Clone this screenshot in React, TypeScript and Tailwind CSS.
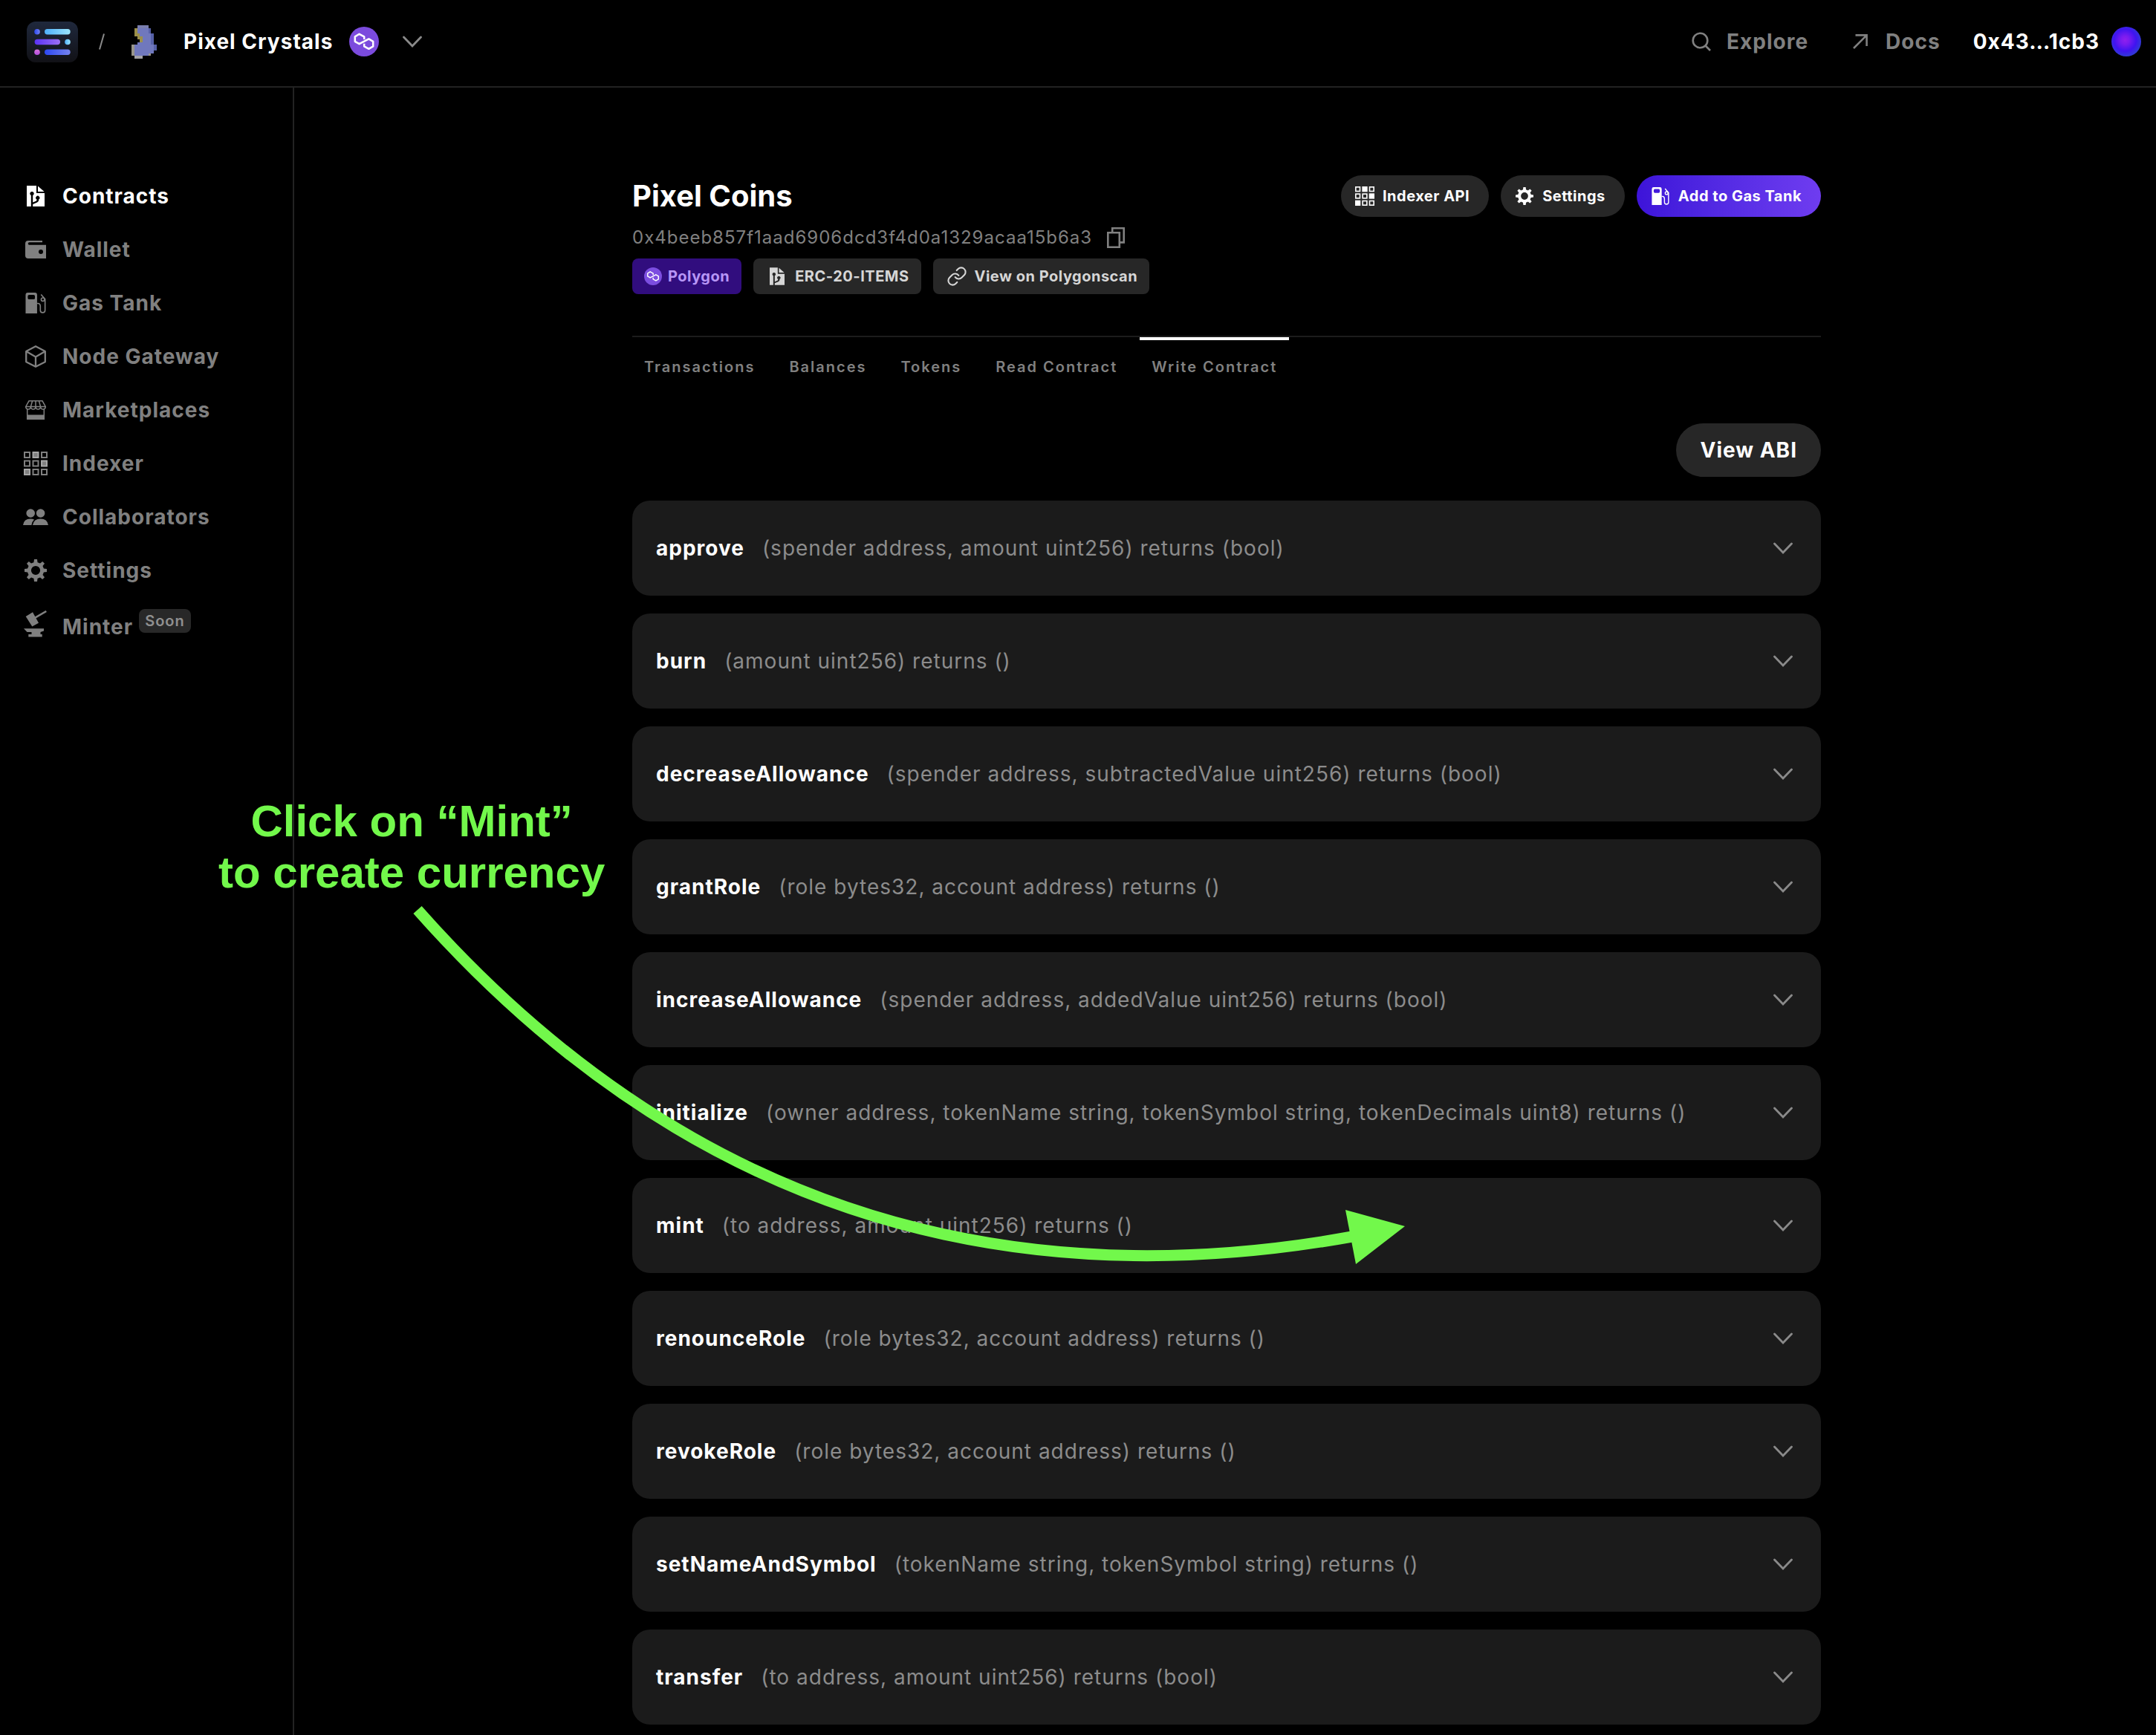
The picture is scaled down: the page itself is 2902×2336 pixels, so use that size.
import type { ReactNode } from "react";

function ContractIcon({ className = "h-7 w-6" }: { className?: string }) {
  return (
    <svg viewBox="0 0 24 28" className={className} fill="currentColor" aria-hidden="true">
      <path
        fillRule="evenodd"
        d="M0 0H13V10H24V28H8.2V25L14 22.6Q16.2 21.6 16.2 19.2V18.6A2.6 2.6 0 1 0 13.4 18.6V19.4Q13.4 20.4 12.4 20.8L8.2 22.6V13A2.7 2.7 0 1 0 5.8 13V28H0Z"
      />
      <path d="M15 0.5L23.5 8H15Z" />
    </svg>
  );
}

function WalletIcon() {
  return (
    <svg viewBox="0 0 28 24" className="h-6 w-7" fill="currentColor" aria-hidden="true">
      <path
        fillRule="evenodd"
        d="M4 0H23V2.2H5.5A1.7 1.7 0 0 0 5.5 5.8H28V24H4A4 4 0 0 1 0 20V4A4 4 0 0 1 4 0ZM21 12A3 3 0 1 0 21 18A3 3 0 1 0 21 12Z"
      />
    </svg>
  );
}

function GasIcon({ className = "h-7 w-7" }: { className?: string }) {
  return (
    <svg viewBox="0 0 28 29" className={className} fill="none" stroke="currentColor" strokeWidth="1.7" aria-hidden="true">
      <path
        fill="currentColor"
        stroke="none"
        fillRule="evenodd"
        d="M3 0H13Q16 0 16 3V29H0V3Q0 0 3 0ZM5 3Q3 3 3 5V7.4Q3 9.4 5 9.4H11Q13 9.4 13 7.4V5Q13 3 11 3Z"
      />
      <path d="M16 15H17Q20.5 15 20.5 19V24.5Q20.5 27.8 23.8 27.8Q27.1 27.8 27.1 24.5V9L21.5 2.5" />
      <circle cx="24" cy="9.6" r="2.3" />
    </svg>
  );
}

function CubeIcon() {
  return (
    <svg viewBox="0 0 28 30" className="h-[30px] w-7" fill="none" stroke="currentColor" strokeWidth="2.3" strokeLinejoin="round" aria-hidden="true">
      <path d="M14 1.2L26.8 8V22.2L14 28.8L1.2 22.2V8ZM1.2 8L14 15.4L26.8 8M14 15.4V28.8" />
    </svg>
  );
}

function ShopIcon() {
  return (
    <svg viewBox="0 0 28 26" className="h-[26px] w-7" fill="none" stroke="currentColor" strokeWidth="1.5" aria-hidden="true">
      <path d="M5 0.8H23L27.3 8.5H0.7ZM9.6 0.8L7.4 8.5M14 0.8V8.5M18.4 0.8L20.6 8.5" />
      <path d="M0.7 8.5Q1 12 4 12Q7.1 12 7.4 8.5Q7.7 12 10.7 12Q13.7 12 14 8.5Q14.3 12 17.3 12Q20.3 12 20.6 8.5Q20.9 12 24 12Q27 12 27.3 8.5" />
      <path d="M2.7 11.5V25H25.3V11.5" />
      <path d="M2 19.5H26V26H2Z" fill="currentColor" stroke="none" />
    </svg>
  );
}

const cells = [0, 1, 2, 3, 4, 5, 6, 7, 8];
const litCells = [1, 5, 6];

function IndexerIcon({ className = "size-8", lit = "#a6a6a6" }: { className?: string; lit?: string }) {
  return (
    <svg viewBox="0 0 32 32" className={className} fill="none" stroke="currentColor" strokeWidth="2" aria-hidden="true">
      {cells.map((i) => {
        const on = litCells.includes(i);
        return (
          <rect
            key={i}
            x={1 + (i % 3) * 11.5}
            y={1 + Math.floor(i / 3) * 11.5}
            width="7"
            height="7"
            fill={on ? "currentColor" : "none"}
            stroke={on ? lit : "currentColor"}
          />
        );
      })}
    </svg>
  );
}

function PeopleIcon() {
  return (
    <svg viewBox="0 0 34 22" className="h-[22px] w-[34px] shrink-0" fill="currentColor" aria-hidden="true">
      <circle cx="10.2" cy="6" r="5.8" />
      <circle cx="23.6" cy="6" r="5.8" />
      <path d="M13 22Q14.5 13.6 23.6 13.6Q32.6 13.6 34 22Z" />
      <path d="M0 22Q1.2 13.6 10 13.6Q12.8 13.6 15 14.6Q12 17.4 11.4 22Z" />
    </svg>
  );
}

const teeth = [0, 45, 90, 135, 180, 225, 270, 315];

function GearIcon({ className = "size-[30px]" }: { className?: string }) {
  return (
    <svg viewBox="0 0 30 30" className={className} fill="currentColor" aria-hidden="true">
      <circle cx="15" cy="15" r="8.6" fill="none" stroke="currentColor" strokeWidth="5" />
      {teeth.map((a) => (
        <path key={a} d="M12.2 6L13 0H17L17.8 6Z" transform={`rotate(${a} 15 15)`} />
      ))}
    </svg>
  );
}

function MinterIcon() {
  return (
    <svg viewBox="0 0 32 36" className="h-9 w-8" fill="currentColor" aria-hidden="true">
      <path d="M2.7 8L12 2.3L20 16.7L11.3 21.5Z" />
      <path d="M14.5 10.2L30.3 1" stroke="currentColor" strokeWidth="2.6" />
      <path d="M0 24.3H27V27.5L22.5 29V32H24.7V35.4H6.3V32H10.5V29H4.5Z" />
    </svg>
  );
}

function PolygonLogo({ className, disc = "#7b4bdd" }: { className: string; disc?: string }) {
  return (
    <svg viewBox="0 0 40 40" className={className} role="img" aria-label="Polygon">
      <circle cx="20" cy="20" r="20" fill={disc} />
      <path
        d="M20.2 17V13.4L13.6 9.8L7.8 13.4V19.8L13.6 23.2L26.4 16.4L32.2 19.8V26.4L26.4 29.8L20.2 26.4V22.8"
        fill="none"
        stroke="#fff"
        strokeWidth="2.5"
        strokeLinejoin="round"
      />
    </svg>
  );
}

function Chevron() {
  return (
    <svg viewBox="0 0 26 16" className="h-4 w-[26px] shrink-0" fill="none" stroke="#8a8a8a" strokeWidth="2.8" strokeLinecap="round" aria-hidden="true">
      <path d="M1.5 2L13 14L24.5 2" />
    </svg>
  );
}

function CopyIcon() {
  return (
    <svg viewBox="0 0 24 28" className="h-7 w-6" fill="none" stroke="currentColor" strokeWidth="2.6" aria-hidden="true">
      <path d="M1.3 7.2H16.8V26.7H1.3ZM7.2 7.2V1.3H22.7V20.4H16.8" />
    </svg>
  );
}

function LinkIcon() {
  return (
    <svg viewBox="0 0 24 24" className="size-7" fill="none" stroke="currentColor" strokeWidth="1.8" strokeLinecap="round" aria-hidden="true">
      <path d="M10 13a5 5 0 0 0 7.54.54l3-3a5 5 0 0 0-7.07-7.07l-1.72 1.71" />
      <path d="M14 11a5 5 0 0 0-7.54-.54l-3 3a5 5 0 0 0 7.07 7.07l1.71-1.71" />
    </svg>
  );
}

function SequenceLogo() {
  return (
    <svg viewBox="0 0 69 55" className="h-[55px] w-[69px]" role="img" aria-label="Sequence">
      <defs>
        <linearGradient id="tile" x1="0" y1="0" x2="0" y2="1">
          <stop offset="0" stopColor="#1f283c" />
          <stop offset="1" stopColor="#111116" />
        </linearGradient>
        <linearGradient id="sky">
          <stop offset="0" stopColor="#4fb0fa" />
          <stop offset="1" stopColor="#9be6fd" />
        </linearGradient>
        <linearGradient id="violet">
          <stop offset="0" stopColor="#5a32f5" />
          <stop offset="1" stopColor="#9b70f3" />
        </linearGradient>
        <linearGradient id="blue">
          <stop offset="0" stopColor="#2c48f2" />
          <stop offset="1" stopColor="#7583ee" />
        </linearGradient>
        <linearGradient id="pink" x1="0" y1="0" x2="0" y2="1">
          <stop offset="0" stopColor="#d873dd" />
          <stop offset="1" stopColor="#b14de0" />
        </linearGradient>
      </defs>
      <rect width="69" height="55" rx="12" fill="url(#tile)" />
      <circle cx="14" cy="13.7" r="3.8" fill="url(#blue)" />
      <rect x="24" y="10" width="34.7" height="7.4" rx="3.7" fill="url(#sky)" />
      <rect x="10.6" y="23.8" width="34.4" height="7.4" rx="3.7" fill="url(#violet)" />
      <circle cx="55" cy="27.5" r="3.8" fill="url(#sky)" />
      <circle cx="14" cy="41.3" r="3.8" fill="url(#pink)" />
      <rect x="24" y="37.6" width="34.7" height="7.4" rx="3.7" fill="url(#blue)" />
    </svg>
  );
}

const sprite = [
  "..gggg...",
  ".ybbbbd..",
  ".ybbbbd..",
  ".yybbbbd.",
  "..yybbbd.",
  "...ybbbd.",
  "..bbbbbd.",
  "tbbbbbbbd",
  "tbbbbbbbd",
  "tbbbbbbb.",
  "tbbbbbt..",
  ".sss.....",
];
const spriteColors: Record<string, string> = {
  g: "#7a7eae",
  b: "#7078bd",
  d: "#5660a6",
  y: "#9c904a",
  t: "#98958a",
  s: "#a3a2a6",
};

function CrystalSprite() {
  return (
    <svg viewBox="0 0 9 12" className="h-[45px] w-[34px]" shapeRendering="crispEdges" role="img" aria-label="Pixel Crystals">
      {sprite.flatMap((row, y) =>
        row.split("").map((c, x) =>
          c === "." ? null : <rect key={`${x}-${y}`} x={x} y={y} width="1" height="1" fill={spriteColors[c]} />
        )
      )}
    </svg>
  );
}

function TopBar() {
  return (
    <header className="flex h-[118px] shrink-0 items-center justify-between border-b-2 border-[#222222] pr-5 pb-1 pl-9">
      <div className="flex items-center">
        <a href="#home">
          <SequenceLogo />
        </a>
        <svg viewBox="0 0 8 22" className="ml-7 h-[22px] w-2" stroke="#8a8a8a" strokeWidth="2" aria-hidden="true">
          <path d="M7 0.5L1 21.5" />
        </svg>
        <span className="ml-9">
          <CrystalSprite />
        </span>
        <span className="ml-9 text-[28px] leading-9 font-bold tracking-[1px] text-white">Pixel Crystals</span>
        <PolygonLogo className="ml-[22px] size-10" />
        <button type="button" aria-label="Switch project" className="ml-8">
          <Chevron />
        </button>
      </div>
      <div className="flex items-center gap-11 text-[28px] leading-9 font-bold tracking-[1px] text-[#808080]">
        <nav className="flex items-center gap-14">
          <a href="#explore" className="flex items-center gap-5">
            <span className="flex w-7 justify-center">
              <svg viewBox="0 0 26 26" className="size-[26px]" fill="none" stroke="currentColor" strokeWidth="2.6" aria-hidden="true">
                <circle cx="11.5" cy="11.5" r="9.8" />
                <path d="M18.5 18.5L25 25" />
              </svg>
            </span>
            Explore
          </a>
          <a href="#docs" className="flex items-center gap-5">
            <span className="flex w-7 justify-center">
              <svg viewBox="0 0 20 20" className="size-5" fill="none" stroke="currentColor" strokeWidth="2.6" aria-hidden="true">
                <path d="M1 19L18.6 1.4M3.5 1.4H18.6V16" />
              </svg>
            </span>
            Docs
          </a>
        </nav>
        <button type="button" className="flex items-center gap-4 font-bold tracking-[1px] text-white">
          0x43…1cb3
          <span className="size-10 rounded-full bg-[radial-gradient(circle_at_46%_45%,#8f20ee_0%,#7a1cf0_18%,#3f14f0_48%,#2f3fd0_75%,#2f6aa0_100%)]" />
        </button>
      </div>
    </header>
  );
}

const navItems: { label: string; icon: ReactNode }[] = [
  { label: "Contracts", icon: <ContractIcon /> },
  { label: "Wallet", icon: <WalletIcon /> },
  { label: "Gas Tank", icon: <GasIcon /> },
  { label: "Node Gateway", icon: <CubeIcon /> },
  { label: "Marketplaces", icon: <ShopIcon /> },
  { label: "Indexer", icon: <IndexerIcon /> },
  { label: "Collaborators", icon: <PeopleIcon /> },
  { label: "Settings", icon: <GearIcon /> },
];

function Sidebar() {
  return (
    <aside className="w-[396px] shrink-0 border-r-2 border-[#222222] pt-[110px]">
      <nav className="flex flex-col text-[28px] leading-9 font-bold tracking-[1px] text-[#808080]">
        {navItems.map((item, i) => (
          <a
            key={item.label}
            href="#nav"
            aria-current={i === 0 ? "page" : undefined}
            className="flex h-18 items-center gap-5 pl-8 aria-[current=page]:text-white"
          >
            <span className="flex w-8 justify-center">{item.icon}</span>
            {item.label}
          </a>
        ))}
        <a href="#nav" className="flex h-20 items-center gap-5 pl-8">
          <span className="mb-2 flex w-8 justify-center">
            <MinterIcon />
          </span>
          <span className="flex items-center gap-2">
            Minter
            <span className="mb-4 rounded-lg bg-[#282828] px-2 py-1 text-[20px] leading-6 font-semibold tracking-[1px] text-[#8f8f8f]">
              Soon
            </span>
          </span>
        </a>
      </nav>
    </aside>
  );
}

function PillButton({ icon, children, primary = false }: { icon: ReactNode; children: ReactNode; primary?: boolean }) {
  return (
    <button
      type="button"
      className={
        "flex h-14 items-center gap-2 rounded-full pr-[26px] pl-4 text-[20px] leading-7 font-bold tracking-wide text-white " +
        (primary ? "bg-linear-to-r from-[#3d13d9] to-[#6f3cf0]" : "bg-[#272727]")
      }
    >
      <span className="flex w-8 justify-center">{icon}</span>
      {children}
    </button>
  );
}

const tabs = ["Transactions", "Balances", "Tokens", "Read Contract", "Write Contract"];

const methods = [
  { name: "approve", signature: "(spender address, amount uint256) returns (bool)" },
  { name: "burn", signature: "(amount uint256) returns ()" },
  { name: "decreaseAllowance", signature: "(spender address, subtractedValue uint256) returns (bool)" },
  { name: "grantRole", signature: "(role bytes32, account address) returns ()" },
  { name: "increaseAllowance", signature: "(spender address, addedValue uint256) returns (bool)" },
  { name: "initialize", signature: "(owner address, tokenName string, tokenSymbol string, tokenDecimals uint8) returns ()" },
  { name: "mint", signature: "(to address, amount uint256) returns ()" },
  { name: "renounceRole", signature: "(role bytes32, account address) returns ()" },
  { name: "revokeRole", signature: "(role bytes32, account address) returns ()" },
  { name: "setNameAndSymbol", signature: "(tokenName string, tokenSymbol string) returns ()" },
  { name: "transfer", signature: "(to address, amount uint256) returns (bool)" },
];

function ContractHeader() {
  return (
    <div className="flex items-start justify-between">
      <div>
        <h1 className="text-[40px] leading-[56px] font-bold text-white">Pixel Coins</h1>
        <div className="mt-3 flex h-8 items-center gap-5 text-[24px] tracking-[1px] text-[#808080]">
          0x4beeb857f1aad6906dcd3f4d0a1329acaa15b6a3
          <button type="button" aria-label="Copy address">
            <CopyIcon />
          </button>
        </div>
        <div className="mt-3 flex gap-4 text-[20px] leading-7 font-bold tracking-wide text-[#d6d6d6]">
          <span className="flex h-12 items-center gap-2 rounded-lg bg-[#310d7e] px-4 text-[#b796f6]">
            <PolygonLogo className="size-6" disc="#7c4ee0" />
            Polygon
          </span>
          <span className="flex h-12 items-center gap-2 rounded-lg bg-[#272727] px-4">
            <span className="flex w-8 justify-center">
              <ContractIcon className="h-6 w-5" />
            </span>
            ERC-20-ITEMS
          </span>
          <a href="#polygonscan" className="flex h-12 items-center gap-2 rounded-lg bg-[#272727] px-4">
            <span className="flex w-8 justify-center">
              <LinkIcon />
            </span>
            View on Polygonscan
          </a>
        </div>
      </div>
      <div className="flex gap-4">
        <PillButton icon={<IndexerIcon className="size-[26px]" lit="#ffffff" />}>Indexer API</PillButton>
        <PillButton icon={<GearIcon className="size-6" />}>Settings</PillButton>
        <PillButton icon={<GasIcon className="size-6" />} primary>
          Add to Gas Tank
        </PillButton>
      </div>
    </div>
  );
}

function Annotation() {
  return (
    <>
      <p className="absolute top-[1071px] left-[294px] w-max text-center font-['Liberation_Sans',Arial,sans-serif] text-[60px] leading-[69px] font-bold text-[#72f84b]">
        Click on “Mint”
        <br />
        to create currency
      </p>
      <svg
        viewBox="540 1200 1360 520"
        className="pointer-events-none absolute top-[1200px] left-[540px] h-[520px] w-[1360px]"
        aria-hidden="true"
      >
        <path d="M562 1225Q1071 1800 1820 1665" fill="none" stroke="#72f84b" strokeWidth="15" />
        <path d="M1811 1629L1891 1651L1825 1702Z" fill="#72f84b" />
      </svg>
    </>
  );
}

export default function App() {
  return (
    <div className="relative flex min-h-screen flex-col bg-black font-['Inter',sans-serif]">
      <TopBar />
      <div className="flex flex-1">
        <Sidebar />
        <main className="ml-1 flex-1 pt-[118px] pb-3">
          <div className="mx-auto w-full max-w-[1600px]">
            <ContractHeader />
            <div role="tablist" className="mt-14 flex gap-3.5 border-t-2 border-[#1c1c1c]">
              {tabs.map((tab, i) => (
                <button
                  key={tab}
                  type="button"
                  role="tab"
                  aria-selected={i === 4}
                  className="h-20 border-y-4 border-transparent px-4 text-[20px] leading-7 font-semibold tracking-widest text-[#808080] aria-selected:border-t-white"
                >
                  {tab}
                </button>
              ))}
            </div>
            <div className="mt-9 flex justify-end">
              <button type="button" className="h-18 rounded-full bg-[#272727] px-8 text-[28px] leading-9 font-bold tracking-[1px] text-white">
                View ABI
              </button>
            </div>
            <ul className="mt-8 flex flex-col gap-6">
              {methods.map((m) => (
                <li key={m.name}>
                  <button
                    type="button"
                    aria-expanded="false"
                    className="flex h-32 w-full items-center gap-6 rounded-3xl bg-[#1b1b1b] pr-[38px] pl-8 text-left text-[28px] leading-9 tracking-[1px]"
                  >
                    <span className="font-bold text-white">{m.name}</span>
                    <span className="flex-1 text-[#8c8c8c]">{m.signature}</span>
                    <Chevron />
                  </button>
                </li>
              ))}
            </ul>
          </div>
        </main>
      </div>
      <Annotation />
    </div>
  );
}
